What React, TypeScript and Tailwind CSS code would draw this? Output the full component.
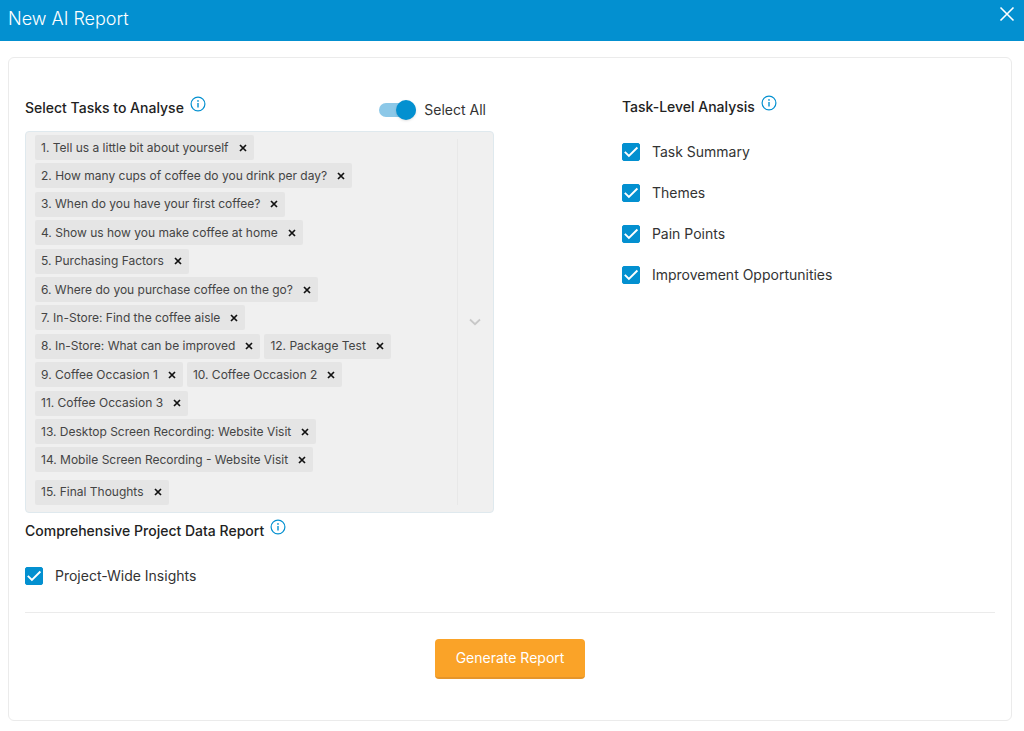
import { useState } from 'react'

const ALL_TASKS = [
  '1. Tell us a little bit about yourself',
  '2. How many cups of coffee do you drink per day?',
  '3. When do you have your first coffee?',
  '4. Show us how you make coffee at home',
  '5. Purchasing Factors',
  '6. Where do you purchase coffee on the go?',
  '7. In-Store: Find the coffee aisle',
  '8. In-Store: What can be improved',
  '12. Package Test',
  '9. Coffee Occasion 1',
  '10. Coffee Occasion 2',
  '11. Coffee Occasion 3',
  '13. Desktop Screen Recording: Website Visit',
  '14. Mobile Screen Recording - Website Visit',
  '15. Final Thoughts',
]

const ANALYSIS_OPTIONS = ['Task Summary', 'Themes', 'Pain Points', 'Improvement Opportunities']

function InfoButton({ label }: { label: string }) {
  return (
    <button type="button" aria-label={label} className="mb-2 cursor-pointer text-[#0390d0]">
      <svg className="size-4" viewBox="0 0 16 16" fill="none">
        <circle cx="8" cy="8" r="6.9" stroke="currentColor" strokeWidth="1.2" />
        <circle cx="8" cy="4.9" r="0.85" fill="currentColor" />
        <path d="M8 7v4.6" stroke="currentColor" strokeWidth="1.4" />
      </svg>
    </button>
  )
}

function SectionTitle({ title, info }: { title: string; info: string }) {
  return (
    <div className="flex h-[26px] items-center gap-1.5">
      <h2 className="text-sm leading-6 font-medium text-[#222]">{title}</h2>
      <InfoButton label={info} />
    </div>
  )
}

function Checkbox({ label }: { label: string }) {
  const [checked, setChecked] = useState(true)

  return (
    <label className="flex cursor-pointer items-center gap-3 text-sm leading-6 text-[#333]">
      <span className="grid size-[18px] place-items-center">
        <input
          type="checkbox"
          checked={checked}
          onChange={(e) => setChecked(e.target.checked)}
          className="col-start-1 row-start-1 size-[18px] appearance-none rounded-xs border border-[#0390d0] bg-white checked:bg-[#0390d0]"
        />
        {checked && (
          <svg className="pointer-events-none z-10 col-start-1 row-start-1 size-[18px]" viewBox="0 0 18 18" fill="none">
            <path d="M2.8 8.9l4.1 4.1 8.5-8.5" stroke="#fff" strokeWidth="1.9" />
          </svg>
        )}
      </span>
      {label}
    </label>
  )
}

export default function App() {
  const [tasks, setTasks] = useState(ALL_TASKS)
  const allSelected = tasks.length === ALL_TASKS.length

  const removeTask = (task: string) => {
    setTasks((prev) => prev.filter((t) => t !== task))
  }

  return (
    <div className="min-h-screen bg-white font-['Inter',sans-serif]">
      {/* Header */}
      <header className="flex h-[41px] items-start justify-between bg-[#0390d0] pr-[9px] pl-2 text-white">
        <h1 className="pt-[5px] text-lg leading-7 font-light">New AI Report</h1>
        <button type="button" aria-label="Close" className="cursor-pointer pt-1.5">
          <svg className="size-4" viewBox="0 0 16 16" fill="none">
            <path d="M1.5 1.5l13 13M14.5 1.5l-13 13" stroke="currentColor" strokeWidth="1.6" />
          </svg>
        </button>
      </header>

      <main className="mt-4 mr-3 ml-2 rounded-md border border-[#ebebeb] px-4 pt-9 pb-[41px]">
        <div className="grid grid-cols-[16fr_10fr]">
          {/* Tasks */}
          <section className="pr-32">
            <div className="flex items-center justify-between pr-2">
              <SectionTitle title="Select Tasks to Analyse" info="About task selection" />
              <label className="flex cursor-pointer items-center gap-2 pt-1 text-sm leading-6 text-[#333]">
                <span className="relative flex h-5 w-[37px] items-center">
                  <input
                    type="checkbox"
                    role="switch"
                    checked={allSelected}
                    onChange={(e) => setTasks(e.target.checked ? ALL_TASKS : [])}
                    className="peer h-3.5 w-full appearance-none rounded-full bg-gray-300 checked:bg-[#8cc8e8]"
                  />
                  <span className="pointer-events-none absolute left-0 size-5 rounded-full bg-gray-100 shadow-sm peer-checked:right-0 peer-checked:left-auto peer-checked:bg-[#0390d0]" />
                </span>
                Select All
              </label>
            </div>

            <div className="mt-[9px] flex min-h-[382px] rounded border border-[#dfe9ee] bg-[#f0f0f0] pt-[3px] pb-[7px] pl-[9px]">
              <ul className="flex flex-1 flex-wrap content-between items-start gap-x-1 pr-8">
                {tasks.map((task) => (
                  <li
                    key={task}
                    className="flex h-[25px] items-center gap-[9px] rounded-xs bg-[#e5e5e5] px-1.5 text-xs text-[#444] last:mt-1"
                  >
                    {task}
                    <button
                      type="button"
                      aria-label={`Remove ${task}`}
                      onClick={() => removeTask(task)}
                      className="cursor-pointer text-[#111]"
                    >
                      <svg className="size-2.5" viewBox="0 0 10 10" fill="none">
                        <path d="M2 2l6 6M8 2l-6 6" stroke="currentColor" strokeWidth="1.7" />
                      </svg>
                    </button>
                  </li>
                ))}
              </ul>
              <button
                type="button"
                aria-label="Show tasks"
                className="mt-1 flex w-9 cursor-pointer items-center justify-center border-l border-[#e8e8e8] text-[#c8c8c8]"
              >
                <svg className="size-3" viewBox="0 0 12 12" fill="none">
                  <path d="M1 3.5l5 4.7 5-4.7" stroke="currentColor" strokeWidth="1.8" />
                </svg>
              </button>
            </div>
          </section>

          {/* Task-level analysis */}
          <section>
            <SectionTitle title="Task-Level Analysis" info="About task-level analysis" />
            <div className="mt-5 flex flex-col gap-[17px]">
              {ANALYSIS_OPTIONS.map((option) => (
                <Checkbox key={option} label={option} />
              ))}
            </div>
          </section>
        </div>

        {/* Project report */}
        <section className="mt-[5px]">
          <SectionTitle title="Comprehensive Project Data Report" info="About the project data report" />
          <div className="mt-5">
            <Checkbox label="Project-Wide Insights" />
          </div>
        </section>

        <div className="mt-6 flex justify-center border-t border-[#ebebeb] pt-[26px]">
          <button
            type="button"
            className="h-10 cursor-pointer rounded border-b-2 border-[#e5952a] bg-[#faa328] px-[21px] text-sm text-white"
          >
            Generate Report
          </button>
        </div>
      </main>
    </div>
  )
}
